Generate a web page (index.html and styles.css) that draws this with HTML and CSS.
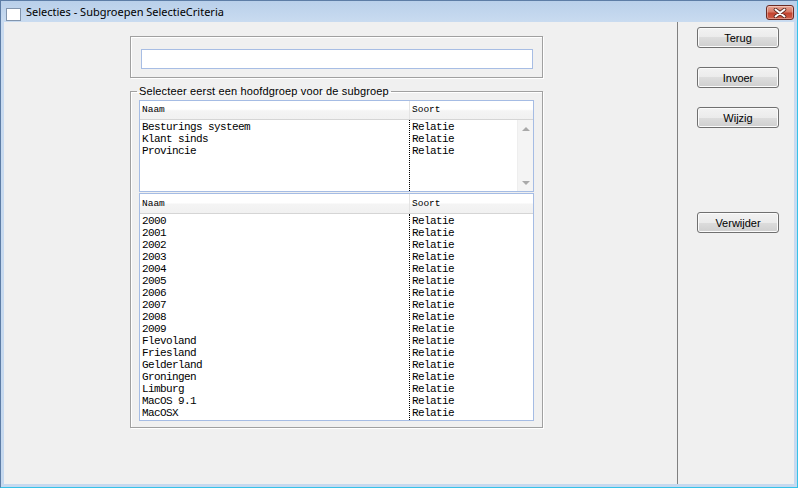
FILE: index.html
```html
<!DOCTYPE html>
<html lang="nl">
<head>
<meta charset="utf-8">
<title>Selecties - Subgroepen SelectieCriteria</title>
<link rel="stylesheet" href="styles.css">
</head>
<body>
<div class="window">
  <div class="titlebar">
    <span class="app-icon"></span>
    <span class="title">Selecties - Subgroepen SelectieCriteria</span>
    <button class="close" type="button" aria-label="Sluiten">
      <svg width="14" height="10" viewBox="0 0 14 10">
        <path d="M2.5 1.5 L11.5 8.5 M11.5 1.5 L2.5 8.5" stroke="#5a2a22" stroke-width="3.6" stroke-linecap="round"/>
        <path d="M2.5 1.5 L11.5 8.5 M11.5 1.5 L2.5 8.5" stroke="#ffffff" stroke-width="2" stroke-linecap="round"/>
      </svg>
    </button>
  </div>
  <div class="client">
    <div class="main">
      <div class="group group-search">
        <div class="textbox"></div>
      </div>
      <fieldset class="group group-lists">
        <legend>Selecteer eerst een hoofdgroep voor de subgroep</legend>
        <div class="list list-top">
          <div class="list-header">
            <span class="hcol hcol-naam">Naam</span>
            <span class="hcol hcol-soort">Soort</span>
          </div>
          <div class="list-body">
            <div class="cols">
              <div class="col col-naam">
                <div>Besturings systeem</div>
                <div>Klant sinds</div>
                <div>Provincie</div>
              </div>
              <div class="col col-soort">
                <div>Relatie</div>
                <div>Relatie</div>
                <div>Relatie</div>
              </div>
            </div>
            <div class="scrollbar">
              <span class="arrow arrow-up"></span>
              <span class="arrow arrow-down"></span>
            </div>
          </div>
        </div>
        <div class="list list-bottom">
          <div class="list-header">
            <span class="hcol hcol-naam">Naam</span>
            <span class="hcol hcol-soort">Soort</span>
          </div>
          <div class="list-body">
            <div class="cols">
              <div class="col col-naam">
                <div>2000</div>
                <div>2001</div>
                <div>2002</div>
                <div>2003</div>
                <div>2004</div>
                <div>2005</div>
                <div>2006</div>
                <div>2007</div>
                <div>2008</div>
                <div>2009</div>
                <div>Flevoland</div>
                <div>Friesland</div>
                <div>Gelderland</div>
                <div>Groningen</div>
                <div>Limburg</div>
                <div>MacOS 9.1</div>
                <div>MacOSX</div>
              </div>
              <div class="col col-soort">
                <div>Relatie</div>
                <div>Relatie</div>
                <div>Relatie</div>
                <div>Relatie</div>
                <div>Relatie</div>
                <div>Relatie</div>
                <div>Relatie</div>
                <div>Relatie</div>
                <div>Relatie</div>
                <div>Relatie</div>
                <div>Relatie</div>
                <div>Relatie</div>
                <div>Relatie</div>
                <div>Relatie</div>
                <div>Relatie</div>
                <div>Relatie</div>
                <div>Relatie</div>
              </div>
            </div>
          </div>
        </div>
      </fieldset>
    </div>
    <div class="side">
      <button class="btn" type="button">Terug</button>
      <button class="btn" type="button">Invoer</button>
      <button class="btn" type="button">Wijzig</button>
      <button class="btn btn-far" type="button">Verwijder</button>
    </div>
  </div>
</div>
</body>
</html>
```

FILE: styles.css
```css
* {
  box-sizing: border-box;
}

html,
body {
  margin: 0;
  padding: 0;
}

body {
  width: 798px;
  height: 488px;
  overflow: hidden;
  background: #ffffff;
  font-family: "Liberation Sans", Arial, sans-serif;
}

.window {
  width: 798px;
  height: 488px;
  display: flex;
  flex-direction: column;
  border: 1px solid #5d7da6;
  border-right-color: #36c2e8;
  border-bottom-color: #36c2e8;
  padding: 0 3px 3px 3px;
  background: linear-gradient(to bottom, #b9d0ea 0px, #c9dbf0 21px, #c6d9ef 100%);
}

.titlebar {
  height: 21px;
  display: flex;
  align-items: flex-start;
  flex-shrink: 0;
}

.app-icon {
  width: 15px;
  height: 13px;
  margin: 7px 0 0 2px;
  background: #ffffff;
  border: 1px solid #8295ad;
}

.title {
  margin: 3px 0 0 5px;
  font-family: "Noto Sans", "Open Sans", sans-serif;
  font-size: 11px;
  line-height: 16px;
  color: #000000;
  flex: 1;
}

.close {
  width: 28px;
  height: 15px;
  margin-top: 4px;
  padding: 0;
  border: 1px solid #6b2b24;
  border-radius: 3px;
  background: linear-gradient(to bottom, #e8a595 0%, #d77a66 45%, #c2432f 55%, #d0604a 100%);
  box-shadow: inset 0 0 0 1px rgba(255, 255, 255, 0.35);
  display: flex;
  align-items: center;
  justify-content: center;
}

.close svg {
  display: block;
}

.client {
  flex: 1;
  display: flex;
  background: #f0f0f0;
  min-height: 0;
}

.main {
  width: 674px;
  border-right: 1px solid #808080;
  padding: 14px 0 0 126px;
}

.group {
  width: 413px;
  border: 1px solid #a0a0a0;
  box-shadow: inset 1px 1px 0 #ffffff, 1px 1px 0 #ffffff;
}

.group-search {
  height: 42px;
  padding: 12px 0 0 10px;
}

.textbox {
  width: 392px;
  height: 20px;
  background: #ffffff;
  border: 1px solid #a7bde4;
}

.group-lists {
  margin: 7px 0 0 0;
  padding: 0 8px 6px 8px;
  min-width: 0;
}

.group-lists legend {
  padding: 0 2px;
  margin-left: -2px;
  font-size: 11px;
  line-height: 13px;
  letter-spacing: 0.15px;
  color: #000000;
}

.list {
  width: 395px;
  background: #ffffff;
  border: 1px solid #a5bce4;
  display: flex;
  flex-direction: column;
  overflow: hidden;
}

.list-top {
  height: 92px;
  margin-top: 2px;
}

.list-bottom {
  height: 228px;
  margin-top: 1px;
}

.list-header {
  height: 19px;
  flex-shrink: 0;
  display: flex;
  border-bottom: 1px solid #d5d5d5;
  background: linear-gradient(to bottom, #ffffff 0%, #ffffff 45%, #f4f4f4 55%, #f1f1f1 100%);
  font-family: "Liberation Mono", monospace;
  font-size: 9.5px;
  line-height: 18px;
  color: #000000;
}

.list-bottom .list-header {
  height: 20px;
  line-height: 19px;
}

.hcol-naam {
  width: 269px;
  padding-left: 2px;
}

.hcol-soort {
  flex: 1;
  padding-left: 2px;
  border-left: 1px solid #e4e4e4;
}

.list-body {
  flex: 1;
  display: flex;
  min-height: 0;
}

.cols {
  flex: 1;
  display: flex;
  font-family: "Liberation Mono", monospace;
  font-size: 11px;
  letter-spacing: -0.6px;
  line-height: 12px;
  color: #000000;
}

.col {
  padding-top: 1px;
  white-space: nowrap;
}

.col-naam {
  width: 269px;
  padding-left: 2px;
}

.col-soort {
  flex: 1;
  padding-left: 2px;
  border-left: 1px dotted #000000;
}

.scrollbar {
  width: 16px;
  flex-shrink: 0;
  background: #f4f4f4;
  border-left: 1px solid #eeeeee;
  display: flex;
  flex-direction: column;
  justify-content: space-between;
  align-items: center;
  padding: 7px 0 6px 0;
}

.arrow {
  width: 0;
  height: 0;
  border-left: 4px solid transparent;
  border-right: 4px solid transparent;
}

.arrow-up {
  border-bottom: 4px solid #a9a9a9;
}

.arrow-down {
  border-top: 4px solid #a9a9a9;
}

.side {
  flex: 1;
  display: flex;
  flex-direction: column;
  align-items: flex-start;
  padding: 5px 0 0 19px;
}

.btn {
  width: 82px;
  height: 21px;
  margin-bottom: 19px;
  padding: 0;
  border: 1px solid #707070;
  border-radius: 3px;
  background: linear-gradient(to bottom, #f2f2f2 0%, #ebebeb 50%, #dddddd 50%, #cfcfcf 100%);
  box-shadow: inset 0 0 0 1px #fbfbfb;
  font-family: "Liberation Sans", Arial, sans-serif;
  font-size: 11px;
  color: #000000;
}

.btn-far {
  margin-top: 65px;
}
```
